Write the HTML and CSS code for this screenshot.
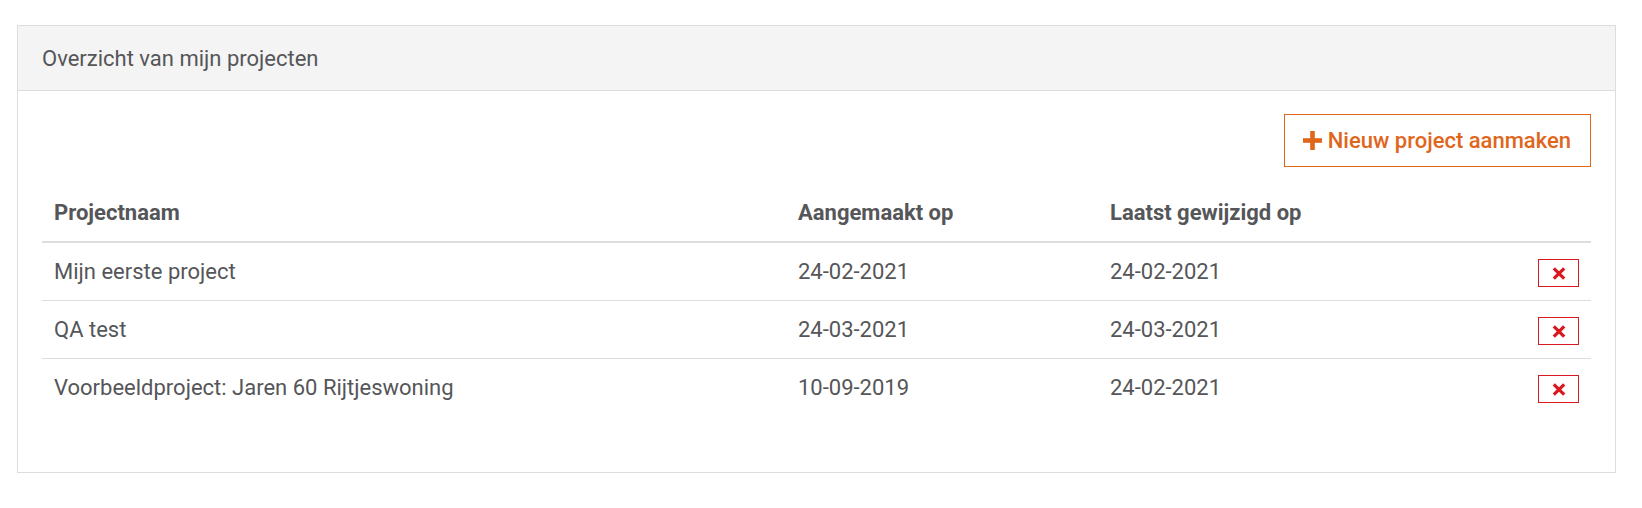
FILE: index.html
```html
<!DOCTYPE html>
<html lang="nl">
<head>
  <meta charset="UTF-8">
  <title>Mijn projecten</title>
  <link rel="stylesheet" href="styles.css">
</head>
<body>
  <div class="page">
    <div class="panel">
      <div class="panel-heading">Overzicht van mijn projecten</div>
      <div class="panel-body">
        <div class="toolbar">
          <button class="btn-new" type="button">
            <svg class="icon-plus" width="19" height="19" viewBox="0 0 19 19">
              <rect x="7.2" y="0" width="4.6" height="19" fill="currentColor"/>
              <rect x="0" y="7.2" width="19" height="4.6" fill="currentColor"/>
            </svg>
            Nieuw project aanmaken
          </button>
        </div>

        <table class="projects">
          <thead>
            <tr>
              <th class="col-name">Projectnaam</th>
              <th class="col-date">Aangemaakt op</th>
              <th>Laatst gewijzigd op</th>
              <th class="col-action"></th>
            </tr>
          </thead>
          <tbody>
            <tr>
              <td>Mijn eerste project</td>
              <td>24-02-2021</td>
              <td>24-02-2021</td>
              <td class="col-action"><button class="btn-delete" type="button" title="Verwijderen"><svg width="14" height="13" viewBox="0 0 14 13"><path d="M1.8 1.3 L12.2 11.7 M12.2 1.3 L1.8 11.7" stroke="currentColor" stroke-width="3.2"/></svg></button></td>
            </tr>
            <tr>
              <td>QA test</td>
              <td>24-03-2021</td>
              <td>24-03-2021</td>
              <td class="col-action"><button class="btn-delete" type="button" title="Verwijderen"><svg width="14" height="13" viewBox="0 0 14 13"><path d="M1.8 1.3 L12.2 11.7 M12.2 1.3 L1.8 11.7" stroke="currentColor" stroke-width="3.2"/></svg></button></td>
            </tr>
            <tr>
              <td>Voorbeeldproject: Jaren 60 Rijtjeswoning</td>
              <td>10-09-2019</td>
              <td>24-02-2021</td>
              <td class="col-action"><button class="btn-delete" type="button" title="Verwijderen"><svg width="14" height="13" viewBox="0 0 14 13"><path d="M1.8 1.3 L12.2 11.7 M12.2 1.3 L1.8 11.7" stroke="currentColor" stroke-width="3.2"/></svg></button></td>
            </tr>
          </tbody>
        </table>
      </div>
    </div>
  </div>
</body>
</html>
```

FILE: styles.css
```css
body {
  margin: 0;
  font-family: Roboto, 'Liberation Sans', sans-serif;
  font-size: 22px;
  color: #555659;
  background-color: #fff;
}

.page {
  padding: 25px 26px 0 17px;
}

.panel {
  border: 1px solid #dddddd;
  background-color: #fff;
}

.panel-heading {
  height: 64px;
  display: flex;
  align-items: center;
  padding: 0 24px;
  background-color: #f4f4f4;
  border-bottom: 1px solid #dddddd;
}

.panel-body {
  padding: 23px 24px 24px 24px;
}

.toolbar {
  display: flex;
  justify-content: flex-end;
  margin-bottom: 17px;
}

.btn-new {
  display: flex;
  align-items: center;
  gap: 6px;
  height: 53px;
  padding: 0 19px 0 18px;
  font-family: inherit;
  font-size: 22px;
  font-weight: 500;
  color: #e0661c;
  background-color: #fff;
  border: 1px solid #e0661c;
  border-radius: 0;
  cursor: pointer;
}

.icon-plus {
  display: block;
}

.projects {
  width: 100%;
  border-collapse: collapse;
  table-layout: fixed;
  margin-bottom: 32px;
}

.projects th,
.projects td {
  padding: 12px;
  line-height: 33px;
  text-align: left;
  vertical-align: middle;
}

.projects th {
  font-weight: 700;
  border-bottom: 2px solid #dddddd;
}

.projects tbody tr + tr td {
  border-top: 1px solid #dddddd;
}

.col-name {
  width: 720px;
}

.col-date {
  width: 288px;
}

.col-action {
  width: 41px;
  text-align: right;
}

.btn-delete {
  display: inline-flex;
  align-items: center;
  justify-content: center;
  width: 41px;
  height: 28px;
  padding: 0;
  vertical-align: middle;
  color: #d9181f;
  background-color: #fff;
  border: 1px solid #d9181f;
  border-radius: 0;
  cursor: pointer;
}
```
